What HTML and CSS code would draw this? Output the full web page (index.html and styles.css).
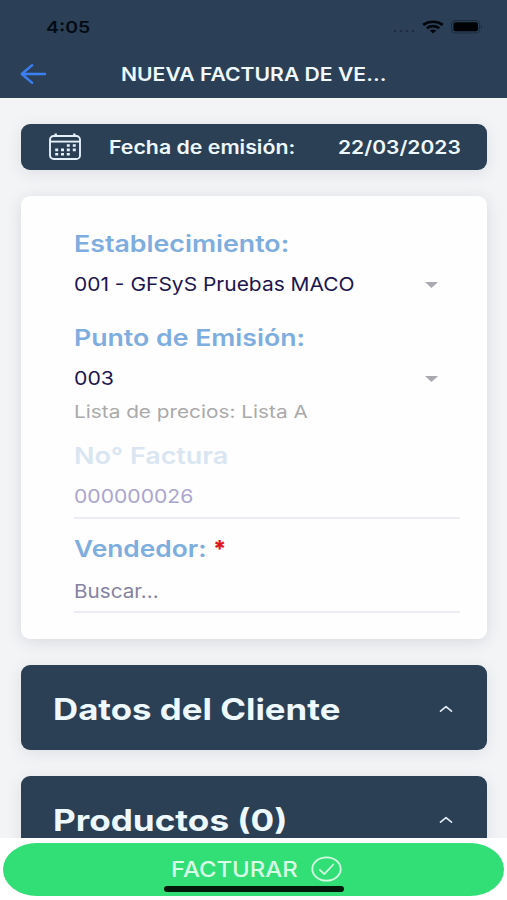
FILE: index.html
```html
<!DOCTYPE html>
<html lang="es">
<head>
<meta charset="utf-8">
<meta name="viewport" content="width=device-width, initial-scale=1">
<title>Nueva factura</title>
<link rel="stylesheet" href="styles.css">
</head>
<body>
<div class="app">
  <header class="top">
    <div class="status">
      <span class="time">4:05</span>
      <span class="indicators">
        <svg class="dots" width="22" height="4" viewBox="0 0 22 4"><circle cx="2" cy="2" r="1.3"/><circle cx="8" cy="2" r="1.3"/><circle cx="14" cy="2" r="1.3"/><circle cx="20" cy="2" r="1.3"/></svg>
        <svg width="22" height="14" viewBox="0 0 22 14" fill="none" stroke="#03070d" stroke-width="2.7"><path d="M1.2 4.8C6.6 .7 15.4 .7 20.8 4.8"/><path d="M4.8 8.2C8.4 5.3 13.6 5.3 17.2 8.2"/><path d="M7.7 10.6Q11 8.3 14.3 10.6L11 13.6Z" fill="#03070d" stroke="none"/></svg>
        <svg class="battery" width="32" height="14" viewBox="0 0 32 14"><rect x=".6" y=".6" width="28" height="12.4" rx="3.4" fill="none" stroke="#1c2a3b" stroke-width="1"/><rect x="2.4" y="2.3" width="24.6" height="9" rx="1.8" fill="#000205"/><path d="M30 4.7q1.8 2.2 0 4.4z" fill="#17222f"/></svg>
      </span>
    </div>
    <div class="nav">
      <svg class="back" width="28" height="22" viewBox="0 0 28 22" fill="none" stroke="#3b7ff2" stroke-width="2.4" stroke-linecap="round" stroke-linejoin="round"><path d="M13.2 2.2L2.7 11l10.5 8.8M3.1 11H26"/></svg>
      <h1 class="title">NUEVA FACTURA DE VE...</h1>
    </div>
  </header>

  <main class="content">
    <section class="date-bar">
      <svg class="calendar" width="32" height="27" viewBox="0 0 32 27" fill="none" stroke="#e4f0fa" stroke-width="1.9"><rect x="1" y="3" width="30" height="23" rx="3.6"/><path d="M1 8.6h30"/><path d="M6.7 3V.5M25.3 3V.5" stroke-width="2.4"/><path d="M17.8 12.5h3M23.8 12.5h3M6.2 16.9h3M12 16.9h3M17.8 16.9h3M23.8 16.9h3M6.2 21.3h3M12 21.3h3M17.8 21.3h3" stroke-width="2.6"/></svg>
      <span class="date-label">Fecha de emisión:</span>
      <span class="date-value">22/03/2023</span>
    </section>

    <section class="card">
      <div class="label"><span class="establishment-label">Establecimiento:</span></div>
      <div class="select">
        <span class="establishment">001 - GFSyS Pruebas MACO</span>
        <svg class="caret" width="13" height="6" viewBox="0 0 13 6"><path d="M0 0h13L6.5 6z"/></svg>
      </div>
      <div class="label point"><span>Punto de Emisión:</span></div>
      <div class="select">
        <span class="point-value">003</span>
        <svg class="caret" width="13" height="6" viewBox="0 0 13 6"><path d="M0 0h13L6.5 6z"/></svg>
      </div>
      <div class="hint"><span>Lista de precios: Lista A</span></div>
      <div class="label number muted"><span>No° Factura</span></div>
      <div class="input disabled"><span>000000026</span></div>
      <div class="label seller"><span>Vendedor:</span><b class="required">*</b></div>
      <div class="input search"><span>Buscar...</span></div>
    </section>

    <section class="accordion">
      <h2 class="client">Datos del Cliente</h2>
      <svg class="chevron" width="14" height="8" viewBox="0 0 14 8"><path d="M1.5 6.2L7 1.6l5.5 4.6"/></svg>
    </section>
    <section class="accordion">
      <h2 class="products">Productos (0)</h2>
      <svg class="chevron" width="14" height="8" viewBox="0 0 14 8"><path d="M1.5 6.2L7 1.6l5.5 4.6"/></svg>
    </section>
  </main>

  <footer class="footer">
    <div class="submit">
      <span class="submit-text">FACTURAR</span>
      <svg class="check" width="31" height="26" viewBox="0 0 31 26" fill="none" stroke="#d5fbe3" stroke-width="1.8" stroke-linecap="round" stroke-linejoin="round"><ellipse cx="15.5" cy="13" rx="14.2" ry="11.6"/><path d="M8.8 13.8l4.5 4.3 9-9.6"/></svg>
    </div>
    <div class="home-indicator"></div>
  </footer>
</div>
</body>
</html>
```
FILE: styles.css
```css
* { box-sizing: border-box; }

body {
  margin: 0;
  font-family: Inter, "Liberation Sans", sans-serif;
  background: #f3f4f6;
}

svg { display: block; flex: none; }

span, h1, h2 {
  display: inline-block;
  margin: 0;
  white-space: nowrap;
  transform-origin: left center;
}

.app {
  display: flex;
  flex-direction: column;
  height: 900px;
  overflow: hidden;
}

.top {
  flex: none;
  height: 97.5px;
  background: #2b4056;
}

.status {
  display: flex;
  align-items: center;
  justify-content: space-between;
  height: 54px;
  padding: 0 23.6px 0 46px;
}

.time {
  font-size: 16.5px;
  font-weight: 600;
  color: #050b14;
  transform: scaleX(1.18);
}

.indicators { display: flex; align-items: center; transform: none; }
.dots { margin: 8px 7px 0 0; fill: #1e2e40; }
.battery { margin-left: 7px; }

.nav {
  display: flex;
  align-items: center;
  height: 40px;
  padding-left: 19px;
}

.title {
  margin-left: 73.5px;
  font-size: 18.5px;
  font-weight: 600;
  color: #f0f9ff;
  transform: scaleX(1.143);
}

.content {
  flex: 1;
  min-height: 0;
  overflow: hidden;
  padding: 26px 20.5px 0 21.4px;
}

.date-bar, .accordion {
  display: flex;
  align-items: center;
  color: #eef8ff;
  background: #2b3f55;
  border-radius: 9px;
  box-shadow: 0 3px 16px rgba(40, 50, 65, .1);
}

.date-bar {
  height: 46.5px;
  padding-left: 27.5px;
  font-size: 18.5px;
  font-weight: 600;
}

.date-label { width: 161px; margin-left: 28.2px; transform: scaleX(1.152); }
.date-value { margin-left: 68px; transform: scaleX(1.136); }

.card {
  height: 442.5px;
  margin-top: 26px;
  padding: 32px 26.5px 0 52.3px;
  background: #fefefe;
  border-radius: 9px;
  box-shadow: 0 3px 16px rgba(40, 50, 65, .13);
}

.label {
  display: flex;
  align-items: center;
  height: 30px;
  padding-top: 1px;
  font-size: 23px;
  font-weight: 600;
  color: #7eaddf;
}

.label span { transform: scaleX(1.16); }
.label .establishment-label { transform: scaleX(1.163); }
.point { margin-top: 12px; }
.number { margin-top: 18px; }
.label.muted { color: #d9e6f2; }
.muted span { transform: scaleX(1.17); }
.seller { margin-top: 15px; }
.seller span { transform: scaleX(1.144); }

.required {
  margin: -1px 0 0 23.5px;
  font-weight: 800;
  color: #e01620;
}

.select {
  display: flex;
  align-items: center;
  justify-content: space-between;
  height: 52px;
  padding-right: 22px;
  font-size: 19px;
  color: #1c164f;
}

.establishment { transform: scaleX(1.103); }
.point-value { transform: scaleX(1.12); }
.caret { margin-top: 2px; fill: #a9a9b0; }

.hint {
  display: flex;
  align-items: center;
  height: 22px;
  margin-top: -4px;
  font-size: 17.5px;
  color: #aaa;
}

.hint span { transform: scaleX(1.187); }

.input {
  display: flex;
  align-items: center;
  height: 42.5px;
  margin-top: 6px;
  border-bottom: 2px solid #ebedf2;
}

.disabled { font-size: 19px; color: #aaa5d0; }
.disabled span { transform: scaleX(1.112); }
.search { height: 42px; margin-top: 7.5px; font-size: 18.5px; color: #8582a4; }
.search span { transform: scaleX(1.117); }

.accordion {
  justify-content: space-between;
  height: 85px;
  margin-top: 26px;
  padding: 4px 33.5px 0 31.6px;
}

.accordion h2 {
  font-size: 29.5px;
  font-weight: 700;
  line-height: 36px;
}

.client { transform: scaleX(1.18); }
.products { transform: scaleX(1.19); }

.chevron {
  fill: none;
  stroke: #e2edf7;
  stroke-width: 1.6;
  stroke-linecap: round;
  stroke-linejoin: round;
}

.footer {
  position: relative;
  flex: none;
  height: 62px;
  padding: 4.5px 3px 0;
  background: #fff;
}

.submit {
  display: flex;
  align-items: center;
  height: 53px;
  padding-left: 167.5px;
  border-radius: 34px / 26.5px;
  background: #31df76;
}

.submit-text {
  width: 111px;
  font-size: 21px;
  font-weight: 500;
  color: #d9fce6;
  transform: scaleX(1.138);
}

.check { margin-left: 29.5px; }

/* System gesture bar over the button */
.home-indicator {
  position: absolute;
  left: 164px;
  bottom: 8.5px;
  width: 180px;
  height: 5.5px;
  border-radius: 3px;
  background: #04180c;
}
```
